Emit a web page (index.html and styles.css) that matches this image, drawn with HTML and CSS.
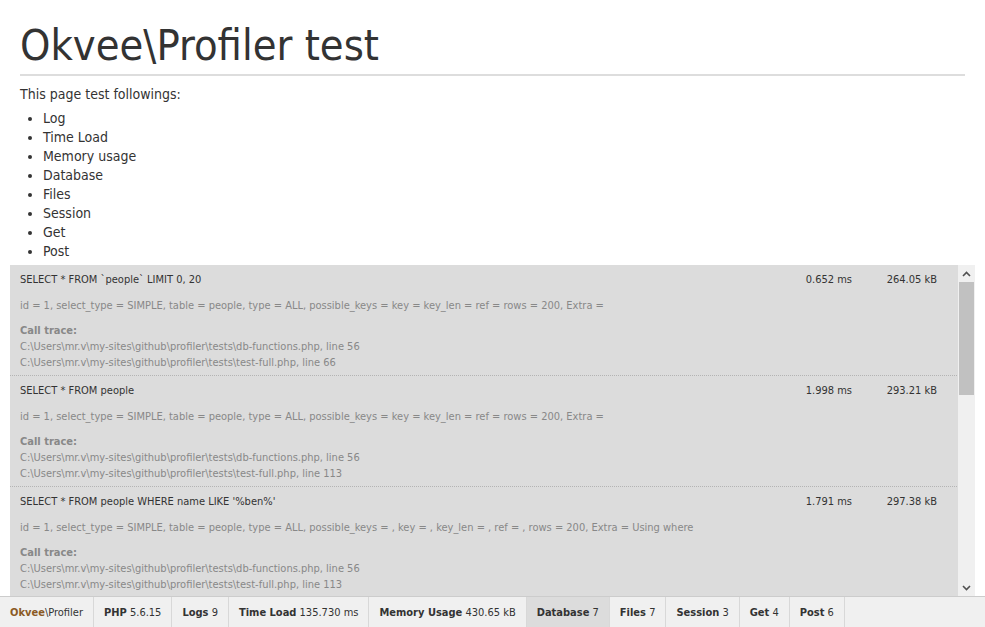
FILE: index.html
```html
<!DOCTYPE html>
<html>
<head>
<meta charset="utf-8">
<link rel="stylesheet" href="styles.css">
</head>
<body>
<div class="page">
  <h1 class="title">Okvee\Profiler test</h1>
  <p class="intro">This page test followings:</p>
  <ul class="features">
    <li>Log</li>
    <li>Time Load</li>
    <li>Memory usage</li>
    <li>Database</li>
    <li>Files</li>
    <li>Session</li>
    <li>Get</li>
    <li>Post</li>
  </ul>
</div>
<div class="panel">
  <div class="entries">
    <div class="entry">
      <div class="row">
        <div class="query">SELECT * FROM `people` LIMIT 0, 20</div>
        <div class="time">0.652 ms</div>
        <div class="mem">264.05 kB</div>
      </div>
      <div class="explain">id = 1, select_type = SIMPLE, table = people, type = ALL, possible_keys = key = key_len = ref = rows = 200, Extra =</div>
      <div class="trace-title">Call trace:</div>
      <div class="trace">C:\Users\mr.v\my-sites\github\profiler\tests\db-functions.php, line 56</div>
      <div class="trace">C:\Users\mr.v\my-sites\github\profiler\tests\test-full.php, line 66</div>
    </div>
    <div class="entry">
      <div class="row">
        <div class="query">SELECT * FROM people</div>
        <div class="time">1.998 ms</div>
        <div class="mem">293.21 kB</div>
      </div>
      <div class="explain">id = 1, select_type = SIMPLE, table = people, type = ALL, possible_keys = key = key_len = ref = rows = 200, Extra =</div>
      <div class="trace-title">Call trace:</div>
      <div class="trace">C:\Users\mr.v\my-sites\github\profiler\tests\db-functions.php, line 56</div>
      <div class="trace">C:\Users\mr.v\my-sites\github\profiler\tests\test-full.php, line 113</div>
    </div>
    <div class="entry">
      <div class="row">
        <div class="query">SELECT * FROM people WHERE name LIKE '%ben%'</div>
        <div class="time">1.791 ms</div>
        <div class="mem">297.38 kB</div>
      </div>
      <div class="explain">id = 1, select_type = SIMPLE, table = people, type = ALL, possible_keys = , key = , key_len = , ref = , rows = 200, Extra = Using where</div>
      <div class="trace-title">Call trace:</div>
      <div class="trace">C:\Users\mr.v\my-sites\github\profiler\tests\db-functions.php, line 56</div>
      <div class="trace">C:\Users\mr.v\my-sites\github\profiler\tests\test-full.php, line 113</div>
    </div>
  </div>
  <div class="scrollbar">
    <div class="sb-btn"><svg width="9" height="6" viewBox="0 0 9 6"><path d="M1 5 L4.5 1.5 L8 5" fill="none" stroke="#505050" stroke-width="1.6"/></svg></div>
    <div class="sb-track"><div class="sb-thumb"></div></div>
    <div class="sb-btn"><svg width="9" height="6" viewBox="0 0 9 6"><path d="M1 1 L4.5 4.5 L8 1" fill="none" stroke="#505050" stroke-width="1.6"/></svg></div>
  </div>
</div>
<div class="bar">
  <div class="tab brand"><b class="brand-name">Okvee</b>\Profiler</div>
  <div class="tab"><b>PHP</b> 5.6.15</div>
  <div class="tab"><b>Logs</b> 9</div>
  <div class="tab"><b>Time Load</b> 135.730 ms</div>
  <div class="tab"><b>Memory Usage</b> 430.65 kB</div>
  <div class="tab active"><b>Database</b> 7</div>
  <div class="tab"><b>Files</b> 7</div>
  <div class="tab"><b>Session</b> 3</div>
  <div class="tab"><b>Get</b> 4</div>
  <div class="tab"><b>Post</b> 6</div>
</div>
</body>
</html>
```

FILE: styles.css
```css
html, body {
  margin: 0;
  padding: 0;
  background: #fff;
  height: 100%;
  overflow: hidden;
}
body {
  font-family: "DejaVu Sans Condensed", "DejaVu Sans", sans-serif;
  color: #333;
  display: flex;
  flex-direction: column;
}
.page {
  padding: 0 20px;
}
.title {
  margin: 18px 0 0;
  font-size: 43px;
  font-weight: normal;
  line-height: 54px;
  color: #333;
  padding-bottom: 2px;
  border-bottom: 2px solid #ddd;
}
.intro {
  font-size: 14px;
  line-height: 19px;
  margin: 9px 0 0;
}
.features {
  margin: 5px 0 0;
  padding-left: 23px;
  font-size: 14px;
  line-height: 19px;
}
.panel {
  margin: 4px 10px 0;
  height: 331px;
  display: flex;
  background: #dcdcdc;
  overflow: hidden;
}
.entries {
  flex: 1;
  overflow: hidden;
  font-size: 11px;
  line-height: 16px;
}
.entry {
  padding: 7px 20px 4px 10px;
  border-bottom: 1px dotted #b4b4b4;
}
.row {
  display: flex;
}
.query {
  flex: 1;
  color: #333;
}
.time {
  width: 80px;
  text-align: right;
}
.mem {
  width: 85px;
  text-align: right;
}
.explain {
  margin-top: 10px;
  color: #888;
}
.trace-title {
  margin-top: 9px;
  font-weight: bold;
  color: #888;
}
.trace {
  color: #888;
}
.scrollbar {
  width: 17px;
  margin-left: 1px;
  background: #f0f0f0;
  display: flex;
  flex-direction: column;
}
.sb-btn {
  height: 17px;
  display: flex;
  align-items: center;
  justify-content: center;
}
.sb-track {
  flex: 1;
}
.sb-thumb {
  height: 113px;
  margin: 0 1px;
  background: #c1c1c1;
}
.bar {
  margin-top: auto;
  height: 30px;
  border-top: 1px solid #ccc;
  background: #f0f0f0;
  display: flex;
  font-size: 11px;
}
.tab {
  padding: 0 10px;
  display: flex;
  align-items: center;
  border-right: 1px solid #d8d8d8;
  color: #333;
  white-space: pre;
}
.tab b {
  font-weight: bold;
}
.tab.active {
  background: #dcdcdc;
}
.brand-name {
  color: #8b5a24;
}
```
